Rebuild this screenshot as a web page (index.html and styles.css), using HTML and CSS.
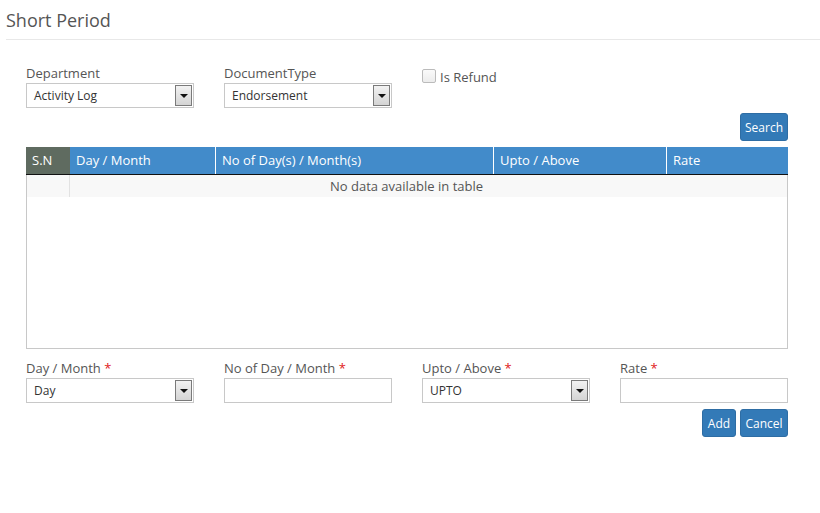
FILE: index.html
```html
<!DOCTYPE html>
<html>
<head>
<meta charset="utf-8">
<link rel="stylesheet" href="styles.css">
</head>
<body>
<div class="page-header"><h1>Short Period</h1></div>
<div class="content">
  <div class="filters">
    <div class="field">
      <label class="lbl">Department</label>
      <div class="select"><span class="val">Activity Log</span><span class="arrow"></span></div>
    </div>
    <div class="field">
      <label class="lbl">DocumentType</label>
      <div class="select"><span class="val">Endorsement</span><span class="arrow"></span></div>
    </div>
    <div class="field check">
      <span class="box"></span><span class="check-lbl">Is Refund</span>
    </div>
  </div>
  <div class="search-row"><button class="btn">Search</button></div>
  <div class="table">
    <div class="thead">
      <div class="th sn">S.N</div>
      <div class="th c1">Day / Month</div>
      <div class="th c2">No of Day(s) / Month(s)</div>
      <div class="th c3">Upto / Above</div>
      <div class="th c4">Rate</div>
    </div>
    <div class="trow">
      <div class="td sn"></div>
      <div class="td empty">No data available in table</div>
    </div>
  </div>
  <div class="form">
    <div class="field">
      <label class="lbl">Day / Month <span class="req">*</span></label>
      <div class="select"><span class="val">Day</span><span class="arrow"></span></div>
    </div>
    <div class="field">
      <label class="lbl">No of Day / Month <span class="req">*</span></label>
      <div class="input"></div>
    </div>
    <div class="field">
      <label class="lbl">Upto / Above <span class="req">*</span></label>
      <div class="select"><span class="val">UPTO</span><span class="arrow"></span></div>
    </div>
    <div class="field">
      <label class="lbl">Rate <span class="req">*</span></label>
      <div class="input"></div>
    </div>
  </div>
  <div class="actions"><button class="btn add">Add</button><button class="btn">Cancel</button></div>
</div>
</body>
</html>
```
FILE: styles.css
```css
* { box-sizing: border-box; }
body {
  margin: 0;
  font-family: "Open Sans", "Liberation Sans", sans-serif;
  color: #555;
  background: #fff;
}
.page-header {
  margin-left: 6px;
  padding: 8px 0 6px;
  border-bottom: 1px solid #e8e8e8;
}
.page-header h1 {
  margin: 0;
  font-size: 18px;
  font-weight: 400;
  line-height: 25px;
  color: #555;
}
.content {
  padding: 0 32px 0 26px;
}
.filters {
  display: flex;
  gap: 30px;
  margin-top: 24px;
}
.field { width: 168px; }
.lbl {
  display: block;
  font-size: 13px;
  line-height: 18px;
  margin-bottom: 1px;
  color: #555;
}
.req { color: #e02020; }
.select {
  height: 25px;
  border: 1px solid #c8c8c8;
  display: flex;
  align-items: center;
  justify-content: space-between;
  padding: 1px 1px 1px 7px;
  font-size: 12px;
  color: #333;
  background: #fff;
}
.arrow {
  width: 17px;
  height: 21px;
  border: 1px solid #7a7a7a;
  background: linear-gradient(#f2f2f2, #d4d4d4);
  position: relative;
}
.arrow::after {
  content: "";
  position: absolute;
  left: 4px;
  top: 8px;
  border-left: 4px solid transparent;
  border-right: 4px solid transparent;
  border-top: 4px solid #111;
}
.input {
  height: 25px;
  border: 1px solid #c8c8c8;
  background: #fff;
}
.check {
  display: flex;
  align-items: center;
  align-self: flex-start;
  margin-top: 4px;
  height: 18px;
}
.box {
  width: 14px;
  height: 14px;
  border: 1px solid #bbb;
  border-radius: 2px;
  background: linear-gradient(#fafafa, #ececec);
  margin-right: 4px;
  margin-top: -3px;
}
.check-lbl { font-size: 13px; color: #555; }
.search-row {
  display: flex;
  justify-content: flex-end;
  margin-top: 5px;
}
.btn {
  font-family: "Open Sans", "Liberation Sans", sans-serif;
  font-size: 12px;
  color: #fff;
  background: #337ab7;
  border: 1px solid #2e6da4;
  border-radius: 3px;
  height: 28px;
  width: 48px;
  padding: 0;
  cursor: pointer;
}
.table {
  margin-top: 6px;
  height: 202px;
  border: 1px solid #c8c8c8;
  border-top: 0;
}
.thead {
  display: flex;
  height: 28px;
  border-bottom: 1px solid #111;
  margin: 0 -1px;
}
.th {
  background: #428bca;
  color: #fff;
  font-size: 13px;
  line-height: 27px;
  padding-left: 6px;
  border-right: 1px solid #fff;
}
.th:last-child { border-right: 0; }
.th.sn { width: 44px; background: #5f6b60; border-right: 0; }
.th.c1 { width: 146px; }
.th.c2 { width: 278px; }
.th.c3 { width: 173px; }
.th.c4 { flex: 1; }
.trow {
  display: flex;
  height: 22px;
  background: #f8f8f8;
}
.td.sn { width: 43px; border-right: 1px solid #e2e2e2; }
.td.empty {
  flex: 1;
  text-align: center;
  font-size: 13px;
  line-height: 22px;
  padding-right: 44px;
  color: #555;
}
.form {
  display: flex;
  gap: 30px;
  margin-top: 10px;
}
.actions {
  display: flex;
  justify-content: flex-end;
  gap: 4px;
  margin-top: 6px;
}
.btn.add { width: 34px; }
```
